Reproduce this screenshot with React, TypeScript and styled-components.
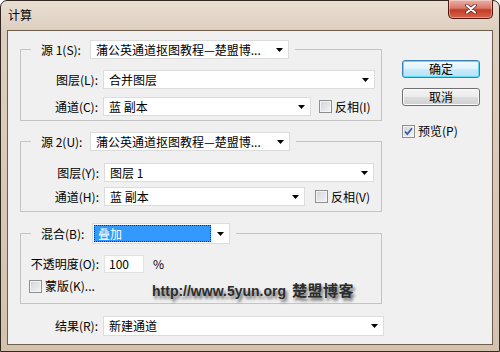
import styled, { createGlobalStyle } from "styled-components"

const GlobalStyle = createGlobalStyle`
  html, body { margin: 0; padding: 0; background: #fff; }
  * { box-sizing: border-box; }
`

const Window = styled.div`
  position: relative;
  width: 500px;
  height: 352px;
  display: flex;
  flex-direction: column;
  padding: 0 6px 6px;
  border: 1px solid #33281f;
  border-radius: 7px 7px 0 0;
  background: linear-gradient(180deg, #e9ded2 0%, #ddcfbf 9%, #d3c2ae 100%);
  font-family: "Noto Sans CJK SC", "Liberation Sans", sans-serif;
  font-size: 12px;
  color: #000;
`

const TitleBar = styled.div`
  height: 29px;
  display: flex;
  align-items: flex-start;
  justify-content: space-between;
`

const Title = styled.div`
  padding: 5px 0 0 1px;
  line-height: 18px;
`

const CloseButton = styled.div`
  width: 45px;
  height: 19px;
  margin-top: -1px;
  display: flex;
  align-items: center;
  justify-content: center;
  border: 1px solid #4e1710;
  border-top: none;
  border-radius: 0 0 5px 5px;
  background: linear-gradient(180deg, #eab0a6 0%, #d9786a 45%, #c33c25 55%, #d4644c 100%);
  box-shadow: inset 0 0 0 1px rgba(255, 255, 255, 0.35);
`

const Client = styled.div`
  flex: 1;
  display: flex;
  padding: 9px 0 0 12px;
  background: #f0f0f0;
  border: 1px solid #6f5d4e;
`

const LeftColumn = styled.div`
  width: 364px;
  display: flex;
  flex-direction: column;
`

const RightColumn = styled.div`
  width: 78px;
  margin-left: 18px;
  padding-top: 20px;
  display: flex;
  flex-direction: column;
`

const Group = styled.fieldset<{ $pt: number; $pb: number; $mt?: number }>`
  width: 362px;
  min-width: 0;
  margin: ${(p) => p.$mt ?? 0}px 0 0;
  padding: ${(p) => p.$pt}px 8px ${(p) => p.$pb}px;
  border: 1px solid #c4c4c4;
`

const Legend = styled.legend`
  display: flex;
  align-items: center;
  margin-left: 2px;
  padding: 0 6px 0 10px;
`

const LegendLabel = styled.span<{ $w: number }>`
  width: ${(p) => p.$w}px;
  white-space: nowrap;
  line-height: 16px;
`

const Rows = styled.div<{ $gap: number }>`
  display: flex;
  flex-direction: column;
  gap: ${(p) => p.$gap}px;
`

const Row = styled.div<{ $mt?: number }>`
  display: flex;
  align-items: center;
  margin-top: ${(p) => p.$mt ?? 0}px;
`

const FieldLabel = styled.span<{ $w: number }>`
  width: ${(p) => p.$w}px;
  margin-right: 5px;
  flex-shrink: 0;
  display: flex;
  justify-content: flex-end;
  white-space: nowrap;
  line-height: 16px;
`

const Combo = styled.div<{ $w: number; $h?: number }>`
  width: ${(p) => p.$w}px;
  height: ${(p) => p.$h ?? 19}px;
  flex-shrink: 0;
  display: flex;
  align-items: center;
  background: #fff;
  border: 1px solid #dcdcdc;
`

const ComboText = styled.span`
  flex: 1;
  padding-left: 5px;
  white-space: nowrap;
  overflow: hidden;
  line-height: 16px;
`

const Highlight = styled.span`
  flex: 1;
  align-self: stretch;
  margin: 1px 0 1px 1px;
  padding-left: 4px;
  display: flex;
  align-items: center;
  background: #3399ff;
  color: #fff;
  outline: 1px dotted #13305a;
  outline-offset: -1px;
  line-height: 16px;
`

const ArrowBox = styled.span<{ $w?: number }>`
  width: ${(p) => p.$w ?? 17}px;
  display: flex;
  justify-content: center;
  align-items: center;
`

const NumberInput = styled.div`
  width: 40px;
  height: 18px;
  padding-left: 4px;
  display: flex;
  align-items: center;
  background: #fff;
  border: 1px solid #e2e2e2;
  line-height: 16px;
`

const Unit = styled.span`
  margin-left: 9px;
  line-height: 16px;
`

const Check = styled.label<{ $ml?: number }>`
  display: flex;
  align-items: center;
  gap: 3px;
  margin-left: ${(p) => p.$ml ?? 0}px;
  white-space: nowrap;
  line-height: 16px;
`

const Box = styled.span`
  width: 13px;
  height: 13px;
  flex-shrink: 0;
  display: flex;
  align-items: center;
  justify-content: center;
  border: 1px solid #8f8f8f;
  background: linear-gradient(135deg, #cfd3d9 0%, #f5f5f5 100%);
  box-shadow: inset 0 0 0 1px #f3f3f3;
`

const Button = styled.div<{ $primary?: boolean }>`
  height: 18px;
  display: flex;
  align-items: center;
  justify-content: center;
  border-radius: 3px;
  line-height: 16px;
  border: 1px solid ${(p) => (p.$primary ? "#3c7fb1" : "#707070")};
  background: ${(p) =>
    p.$primary
      ? "linear-gradient(180deg, #f1fafe 0%, #e0f3fc 50%, #c9ebfa 51%, #b6e2f7 100%)"
      : "linear-gradient(180deg, #f4f4f4 0%, #ebebeb 50%, #dddddd 51%, #cfcfcf 100%)"};
  box-shadow: ${(p) => (p.$primary ? "inset 0 0 0 1px #5fdcf8" : "inset 0 0 0 1px #fbfbfb")};
  & + & {
    margin-top: 10px;
  }
`

const Preview = styled(Check)`
  margin-top: 17px;
`

const Watermark = styled.div`
  position: absolute;
  left: 151px;
  top: 278px;
  display: flex;
  align-items: baseline;
  gap: 6px;
  color: #2c2c2c;
  text-shadow: 2px 3px 3px rgba(0, 0, 0, 0.55);
  pointer-events: none;
`

const WatermarkUrl = styled.span`
  font-family: "Liberation Sans", Arial, sans-serif;
  font-weight: bold;
  font-size: 14px;
`

const WatermarkName = styled.span`
  font-family: "Noto Sans CJK SC", sans-serif;
  font-weight: bold;
  font-size: 15px;
  letter-spacing: 0.5px;
`

const Arrow = ({ w }: { w?: number }) => (
  <ArrowBox $w={w}>
    <svg width="7" height="4" viewBox="0 0 7 4">
      <path d="M0 0h7L3.5 4z" fill="#000" />
    </svg>
  </ArrowBox>
)

const CheckBox = ({ checked }: { checked?: boolean }) => (
  <Box>
    {checked && (
      <svg width="9" height="9" viewBox="0 0 9 9">
        <path d="M1 4.5l2.3 2.6L8 1.2" fill="none" stroke="#3d5ea6" strokeWidth="1.8" />
      </svg>
    )}
  </Box>
)

const Select = ({ w, h, children }: { w: number; h?: number; children: string }) => (
  <Combo $w={w} $h={h}>
    <ComboText>{children}</ComboText>
    <Arrow />
  </Combo>
)

const sourceName = "蒲公英通道抠图教程—楚盟博..."

export default function App() {
  return (
    <>
      <GlobalStyle />
      <Window>
        <TitleBar>
          <Title>计算</Title>
          <CloseButton>
            <svg width="12" height="10" viewBox="0 0 12 10">
              <path d="M2 1.5l8 7M10 1.5l-8 7" stroke="#5a1f16" strokeWidth="3.6" strokeLinecap="round" />
              <path d="M2 1.5l8 7M10 1.5l-8 7" stroke="#fff" strokeWidth="2.2" strokeLinecap="round" />
            </svg>
          </CloseButton>
        </TitleBar>
        <Client>
          <LeftColumn>
            <Group $pt={11} $pb={4}>
              <Legend>
                <LegendLabel $w={49}>源 1(S):</LegendLabel>
                <Select w={199}>{sourceName}</Select>
              </Legend>
              <Rows $gap={8}>
                <Row>
                  <FieldLabel $w={69}>图层(L):</FieldLabel>
                  <Select w={272}>合并图层</Select>
                </Row>
                <Row>
                  <FieldLabel $w={69}>通道(C):</FieldLabel>
                  <Select w={208}>蓝 副本</Select>
                  <Check $ml={8}>
                    <CheckBox />
                    反相(I)
                  </Check>
                </Row>
              </Rows>
            </Group>

            <Group $pt={12} $pb={5} $mt={11}>
              <Legend>
                <LegendLabel $w={49}>源 2(U):</LegendLabel>
                <Select w={200}>{sourceName}</Select>
              </Legend>
              <Rows $gap={5}>
                <Row>
                  <FieldLabel $w={70}>图层(Y):</FieldLabel>
                  <Select w={270}>图层 1</Select>
                </Row>
                <Row>
                  <FieldLabel $w={70}>通道(H):</FieldLabel>
                  <Select w={201}>蓝 副本</Select>
                  <Check $ml={10}>
                    <CheckBox />
                    反相(V)
                  </Check>
                </Row>
              </Rows>
            </Group>

            <Group $pt={11} $pb={9} $mt={11}>
              <Legend>
                <LegendLabel $w={51}>混合(B):</LegendLabel>
                <Combo $w={138} $h={21}>
                  <Highlight>叠加</Highlight>
                  <Arrow w={18} />
                </Combo>
              </Legend>
              <Rows $gap={5}>
                <Row>
                  <FieldLabel $w={70}>不透明度(O):</FieldLabel>
                  <NumberInput>100</NumberInput>
                  <Unit>%</Unit>
                </Row>
                <Row>
                  <Check>
                    <CheckBox />
                    蒙版(K)...
                  </Check>
                </Row>
              </Rows>
            </Group>

            <Row $mt={12}>
              <FieldLabel $w={78}>结果(R):</FieldLabel>
              <Select w={281} h={20}>新建通道</Select>
            </Row>
          </LeftColumn>

          <RightColumn>
            <Button $primary>确定</Button>
            <Button>取消</Button>
            <Preview>
              <CheckBox checked />
              预览(P)
            </Preview>
          </RightColumn>
        </Client>
        <Watermark>
          <WatermarkUrl>http://www.5yun.org</WatermarkUrl>
          <WatermarkName>楚盟博客</WatermarkName>
        </Watermark>
      </Window>
    </>
  )
}
